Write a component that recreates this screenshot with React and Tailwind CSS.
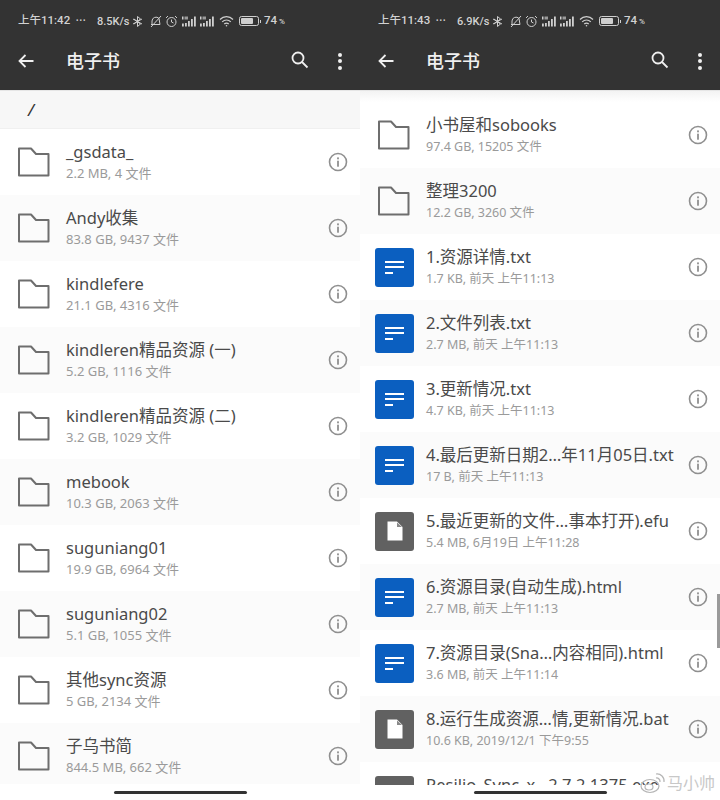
const FONT = '"Noto Sans","Noto Sans CJK SC",sans-serif';
const STATUS_FONT = '"Roboto","Noto Sans CJK SC",sans-serif';

function Folder() {
  return (
    <svg width="33" height="30" viewBox="0 0 33 30" fill="none" stroke="#6e6e6e" strokeWidth="2" strokeLinejoin="round" className="shrink-0 -ml-[1px]">
      <path d="M2 1.500 H14 L19 7 H31.500 V28.500 H2 Z" />
    </svg>
  );
}

function DocIcon() {
  return (
    <div className="w-[39px] h-[39px] shrink-0 rounded-[3px] bg-[#0b5fc0] flex flex-col justify-center gap-[3.500px] pl-[10px]">
      <div className="w-[19px] h-[2px] bg-white" />
      <div className="w-[19px] h-[2px] bg-white" />
      <div className="w-[8px] h-[2px] bg-white" />
    </div>
  );
}

function GenericIcon() {
  return (
    <div className="w-[39px] h-[39px] shrink-0 rounded-[3px] bg-[#616161] flex items-center justify-center">
      <svg width="16" height="20" viewBox="0 0 16 20">
        <path d="M0.500 0.500 H10 L15.500 6 V19.500 H0.500 Z" fill="#fff" />
        <path d="M10 1.500 V6 H15 Z" fill="#8a8a8a" />
      </svg>
    </div>
  );
}

function Info() {
  return (
    <svg width="20" height="20" viewBox="0 0 20 20" fill="none" className="shrink-0">
      <circle cx="10" cy="10" r="8.500" stroke="#8f8f8f" strokeWidth="1.600" />
      <rect x="9.100" y="8.700" width="1.800" height="6" fill="#8f8f8f" />
      <rect x="9.100" y="5.400" width="1.800" height="1.900" fill="#8f8f8f" />
    </svg>
  );
}

function Signal() {
  return (
    <svg width="15" height="11" viewBox="0 0 15 11" fill="#cfcfcf">
      <rect x="0" y="7.500" width="1.800" height="3" />
      <rect x="3" y="7" width="1.800" height="3.500" />
      <rect x="6" y="5" width="1.800" height="5.500" />
      <rect x="9" y="3" width="1.800" height="7.500" />
      <rect x="12" y="0.500" width="1.800" height="10" />
      <rect x="0" y="0.500" width="1.500" height="3" />
      <rect x="2.500" y="0.500" width="3.500" height="3" fill="#9a9a9a" />
    </svg>
  );
}

function StatusIcons() {
  return (
    <div className="flex items-center">
      <svg width="11" height="11" viewBox="0 0 11 11" fill="none" stroke="#cfcfcf" strokeWidth="1">
        <path d="M5.500 0.500 V10.500 M1 3 L10 8 M1 8 L10 3" />
        <path d="M5.500 0.500 L8.500 3 L2 8 M5.500 10.500 L8.500 8 L2 3" />
      </svg>
      <svg width="14" height="13" viewBox="0 0 14 13" fill="none" stroke="#cfcfcf" strokeWidth="1" className="ml-[6px]">
        <path d="M3 9.500 V6 A4 4 0 0 1 10 3.500 L11 9.500 H2 M12 1 L2 12" />
      </svg>
      <svg width="13" height="13" viewBox="0 0 13 13" fill="none" stroke="#cfcfcf" strokeWidth="1" className="ml-[2px]">
        <circle cx="6.500" cy="7" r="4.500" />
        <path d="M6.500 4.500 V7 L8.500 8 M1 3 L3 1 M12 3 L10 1" />
      </svg>
      <span className="ml-[4px]"><Signal /></span>
      <span className="ml-[3px]"><Signal /></span>
      <svg width="15" height="11" viewBox="0 0 15 11" fill="none" stroke="#cfcfcf" strokeWidth="1.200" className="ml-[4px]">
        <path d="M1 3.500 A9 9 0 0 1 14 3.500 M3.200 5.800 A6 6 0 0 1 11.800 5.800 M5.300 8 A3 3 0 0 1 9.700 8" />
        <circle cx="7.500" cy="9.700" r="0.800" fill="#cfcfcf" stroke="none" />
      </svg>
      <div className="flex items-center ml-[5px]">
        <div className="w-[20px] h-[10px] rounded-[2.500px] border border-[#cfcfcf] p-[1px]">
          <div className="h-full w-[74%] bg-[#cfcfcf] rounded-[1px]" />
        </div>
        <div className="w-[1px] h-[3px] bg-[#cfcfcf] ml-[1px]" />
      </div>
    </div>
  );
}

function Header({ time, speed }) {
  return (
    <div className="h-[91px] shrink-0 bg-[#333333] border-b border-[#e6e6e6]">
      <div className="h-[42px] pl-[18px] flex items-center text-[11px] font-medium text-[#d2d2d2] leading-none" style={{ fontFamily: STATUS_FONT }}>
        <span className="w-[58px] whitespace-nowrap text-[11.500px]">{time}</span>
        <span className="w-[21px] text-[7px] tracking-[1px]">•••</span>
        <span className="w-[35px] whitespace-nowrap">{speed}</span>
        <StatusIcons />
        <span className="ml-[3px] whitespace-nowrap text-[11.500px]">74<span className="text-[8px]"> %</span></span>
      </div>
      <div className="h-[38px] flex items-center pl-[18px] pr-[18px]">
        <svg width="16" height="14" viewBox="0 0 16 14" fill="none" stroke="#f0f0f0" strokeWidth="1.800" className="shrink-0">
          <path d="M15.500 7 H1.500 M7.500 1 L1.500 7 L7.500 13" />
        </svg>
        <span className="ml-[32px] text-[18px] font-medium text-[#f0f0f0]">电子书</span>
        <svg width="18" height="18" viewBox="0 0 18 18" fill="none" stroke="#f0f0f0" strokeWidth="1.800" className="ml-auto -mt-[2px]">
          <circle cx="7" cy="7" r="5.500" />
          <path d="M11 11 L16.500 16.500" />
        </svg>
        <div className="ml-[29px] flex flex-col gap-[2.500px]">
          <div className="w-[4px] h-[4px] rounded-full bg-[#f0f0f0]" />
          <div className="w-[4px] h-[4px] rounded-full bg-[#f0f0f0]" />
          <div className="w-[4px] h-[4px] rounded-full bg-[#f0f0f0]" />
        </div>
      </div>
    </div>
  );
}

function Row({ icon, name, sub, shade, iconLeft, narrowSub }) {
  return (
    <div className={`h-[66px] shrink-0 flex items-center pr-[12px] ${iconLeft ? 'pl-[15px]' : 'pl-[18px]'} ${shade ? 'bg-[#fbfbfb]' : 'bg-white'}`}>
      <div className={`${iconLeft ? 'w-[51px]' : 'w-[48px]'} shrink-0`}>{icon}</div>
      <div className="flex-1 min-w-0 pb-[1.500px]">
        <div className="text-[16.500px] leading-[22px] mb-[1.500px] text-[#4a4a4a] whitespace-nowrap">{name}</div>
        <div className={`${narrowSub ? 'text-[12.500px]' : 'text-[13px]'} leading-[17px] min-h-[17px] text-[#9a9a9a] whitespace-nowrap`}>{sub}</div>
      </div>
      <Info />
    </div>
  );
}

const left = [
  ['_gsdata_', '2.2 MB, 4 文件'],
  ['Andy收集', '83.8 GB, 9437 文件'],
  ['kindlefere', '21.1 GB, 4316 文件'],
  ['kindleren精品资源 (一)', '5.2 GB, 1116 文件'],
  ['kindleren精品资源 (二)', '3.2 GB, 1029 文件'],
  ['mebook', '10.3 GB, 2063 文件'],
  ['suguniang01', '19.9 GB, 6964 文件'],
  ['suguniang02', '5.1 GB, 1055 文件'],
  ['其他sync资源', '5 GB, 2134 文件'],
  ['子乌书简', '844.5 MB, 662 文件'],
];

const right = [
  ['f', '小书屋和sobooks', '97.4 GB, 15205 文件'],
  ['f', '整理3200', '12.2 GB, 3260 文件'],
  ['d', '1.资源详情.txt', '1.7 KB, 前天 上午11:13'],
  ['d', '2.文件列表.txt', '2.7 MB, 前天 上午11:13'],
  ['d', '3.更新情况.txt', '4.7 KB, 前天 上午11:13'],
  ['d', '4.最后更新日期2…年11月05日.txt', '17 B, 前天 上午11:13'],
  ['g', '5.最近更新的文件…事本打开).efu', '5.4 MB, 6月19日 上午11:28'],
  ['d', '6.资源目录(自动生成).html', '2.7 MB, 前天 上午11:13'],
  ['d', '7.资源目录(Sna…内容相同).html', '3.6 MB, 前天 上午11:14'],
  ['g', '8.运行生成资源…情,更新情况.bat', '10.6 KB, 2019/12/1 下午9:55'],
  ['g', 'Resilio_Sync_x…2.7.2.1375.exe', ''],
];

function BottomBar({ h }) {
  return (
    <div className={`${h} shrink-0 bg-white flex justify-center items-end pb-[6px]`}>
      <div className="w-[133px] h-[3px] rounded-full bg-[#333333]" />
    </div>
  );
}

export default function App() {
  return (
    <div className="w-[720px] h-[800px] flex overflow-hidden bg-white" style={{ fontFamily: FONT }}>
      <div className="w-[360px] h-full flex flex-col overflow-hidden">
        <Header time="上午11:42" speed="8.5K/s" />
        <div className="h-[38px] shrink-0 bg-[#f7f7f7] border-b border-[#f0f0f0] pl-[28px] flex items-center text-[17px] italic text-[#333]">/</div>
        <div className="flex-1 min-h-0 overflow-hidden flex flex-col">
          {left.map(([n, s], i) => (
            <Row key={n} icon={<Folder />} name={n} sub={s} shade={i % 2 === 1} />
          ))}
        </div>
        <BottomBar h="h-[16px]" />
      </div>
      <div className="relative w-[360px] h-full flex flex-col overflow-hidden">
        <Header time="上午11:43" speed="6.9K/s" />
        <div className="flex-1 min-h-0 overflow-hidden flex flex-col">
          <div className="h-[11px] shrink-0 bg-gradient-to-b from-[#f3f3f3] to-white" />
          {right.map(([k, n, s], i) => (
            <Row
              key={n}
              narrowSub
              iconLeft={k !== 'f'}
              icon={k === 'f' ? <Folder /> : k === 'd' ? <DocIcon /> : <GenericIcon />}
              name={n}
              sub={s}
              shade={i % 2 === 1}
            />
          ))}
        </div>
        <BottomBar h="h-[15px]" />
        <div className="absolute right-0 top-[594px] w-[3px] h-[54px] bg-[#9a9a9a]" />
        <div className="absolute right-[5px] bottom-[5px] flex items-center">
          <svg width="26" height="24" viewBox="0 0 26 24" fill="none" stroke="#b5b5b5" strokeWidth="1.200">
            <ellipse cx="10" cy="15" rx="9" ry="6.500" />
            <ellipse cx="9" cy="16" rx="4" ry="3" />
            <path d="M16 3 A7 7 0 0 1 24 11 M16 7 A3.500 3.500 0 0 1 20 11" />
          </svg>
          <span className="text-[16px] leading-none ml-[1px] text-[#c8c8c8]">马小帅</span>
        </div>
      </div>
    </div>
  );
}
